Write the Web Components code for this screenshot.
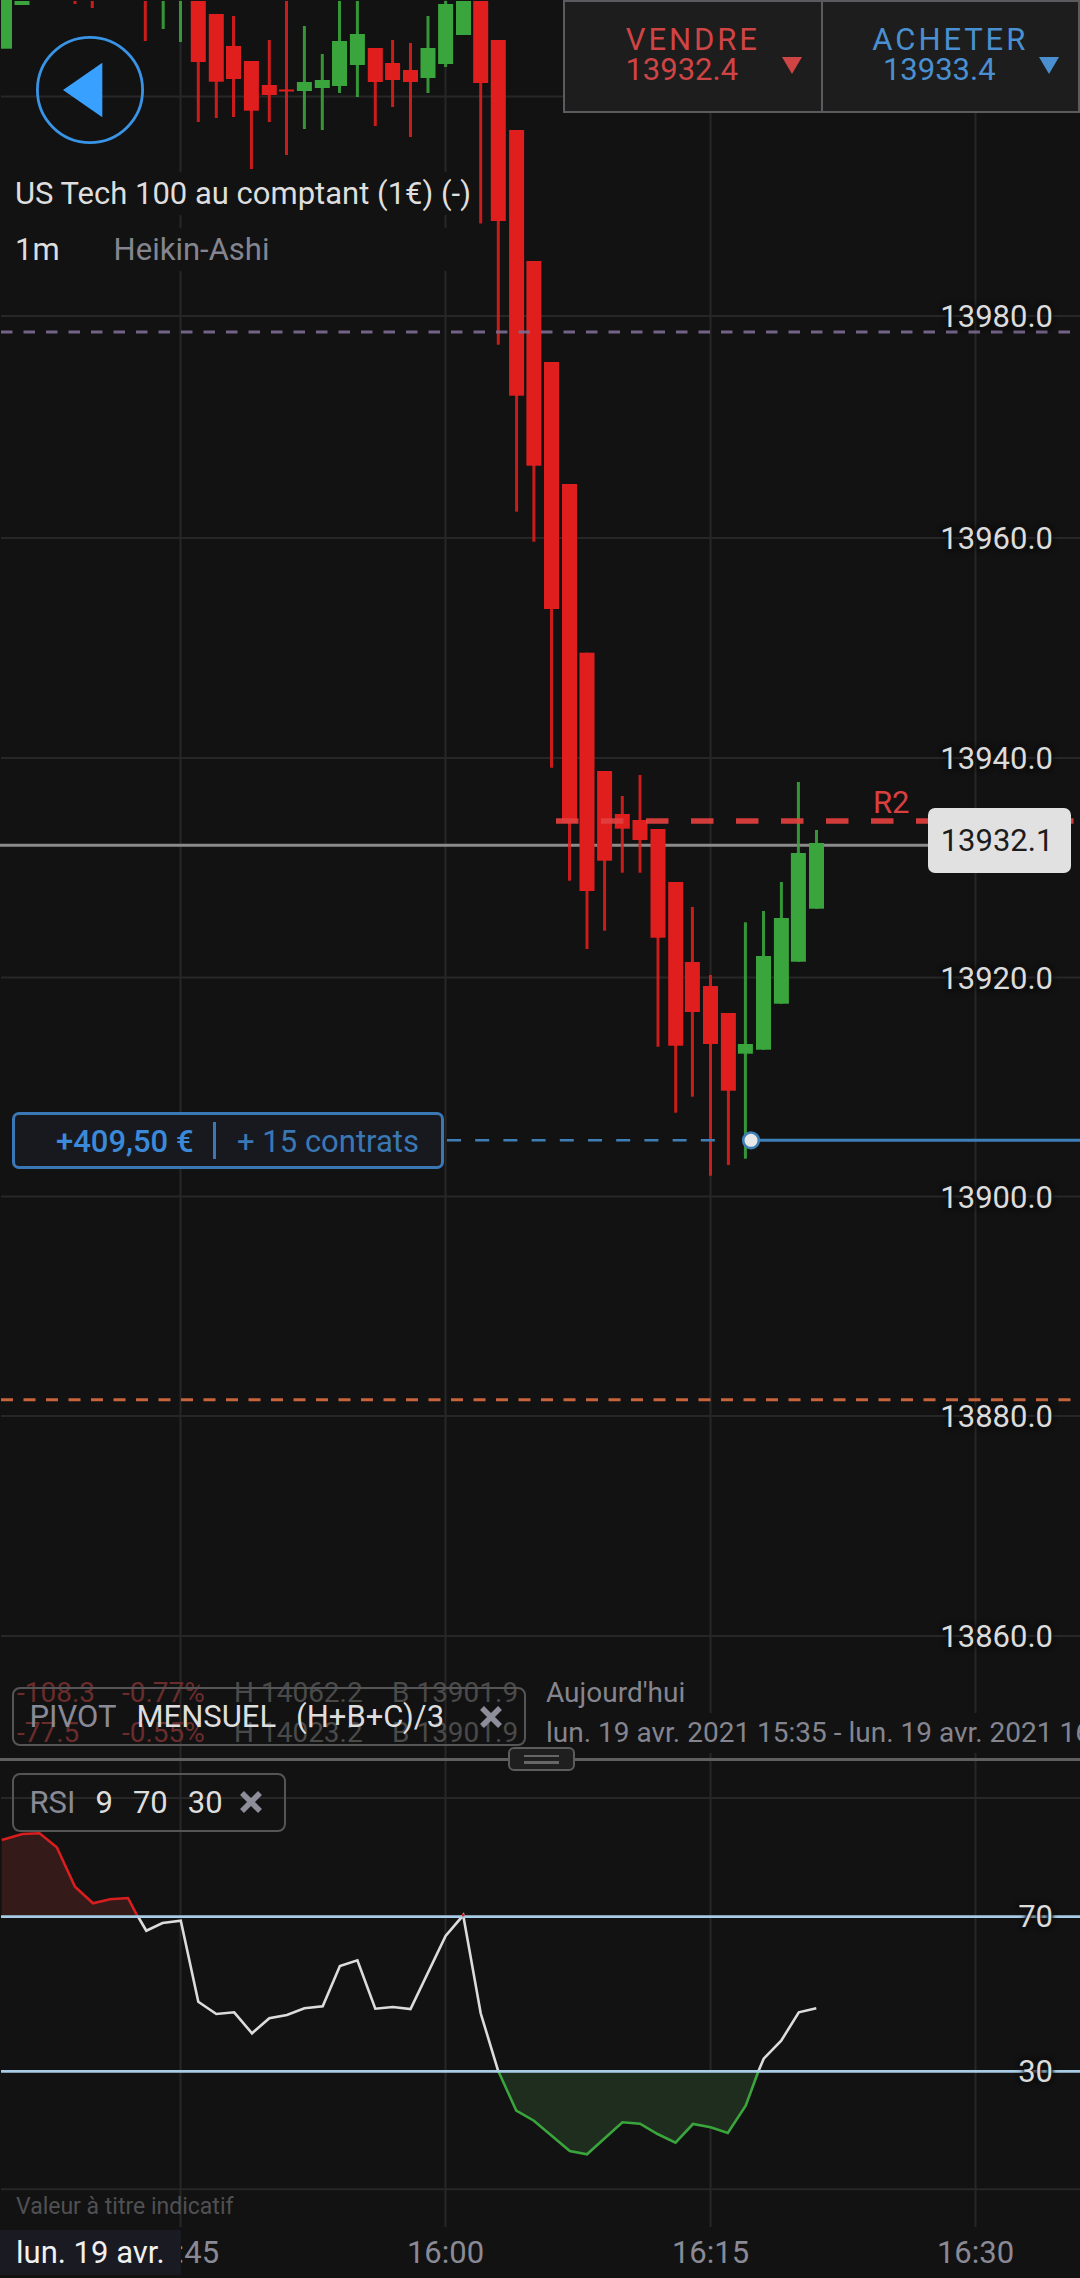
<!DOCTYPE html>
<html lang="fr">
<head>
<meta charset="utf-8">
<title>US Tech 100</title>
<style>
    html, body {
        margin: 0;
        background: #121212;
        overflow: hidden;
    }
    trade-screen {
        font-family: Roboto, "Liberation Sans", sans-serif;
    }
</style>
</head>
<body>
<trade-screen>
    <price-chart>
        <back-button></back-button>
        <instrument-title name="US Tech 100 au comptant (1€) (-)" period="1m" kind="Heikin-Ashi"></instrument-title>
        <trade-buttons sell="13932.4" buy="13933.4"></trade-buttons>
        <position-tag amount="+409,50 €" size="+ 15 contrats"></position-tag>
        <session-stats></session-stats>
        <indicator-chip name="PIVOT" style="left:12px;top:1687px;height:59px"><span>MENSUEL</span><span>(H+B+C)/3</span></indicator-chip>
    </price-chart>
    <pane-divider></pane-divider>
    <rsi-pane>
        <indicator-chip name="RSI" style="left:12px;top:11.5px;height:59px" close-gap="17"><span>9</span><span>70</span><span>30</span></indicator-chip>
    </rsi-pane>
    <time-axis date="lun. 19 avr."></time-axis>
</trade-screen>

<script>
const GRID_X = [180.5, 445.5, 710.5, 975.5];

// x, wick top, body top, body bottom, wick bottom, colour
const CANDLES = [
    [4.5, 0, 0, 48.7, 0, 'g'], [22, 1, 1, 5, 5, 'g'],
    [75, 1, 1, 1, 4, 'r'], [92.3, 1, 1, 1, 8, 'r'], [145.3, 1, 1, 1, 41, 'r'],
    [163.2, 1, 1, 1, 29, 'g'], [180.5, 1, 1, 1, 42, 'g'],
    [198.3, 1, 1, 62, 122, 'r'], [216.3, 14, 14, 81.7, 118, 'r'], [233.5, 16, 46, 79, 117, 'r'],
    [251.4, 61, 61, 110.7, 169, 'r'], [269.3, 40, 85, 95, 122, 'r'], [286.5, 1, 89.5, 91.5, 155, 'r'],
    [304.4, 26, 82, 91, 129, 'g'], [322.3, 54, 80, 88, 130, 'g'], [339.5, 1, 41, 86, 93, 'g'],
    [357.4, 1, 34, 65, 97, 'g'], [375.3, 48, 48, 82, 126, 'r'], [392.6, 40, 63, 80, 107, 'r'],
    [410.5, 43, 70, 82, 137, 'r'], [428, 16, 48, 78, 93, 'g'], [445.6, 1, 4, 64, 67, 'g'],
    [463.5, 1, 1, 35, 35, 'g'], [480.7, 1, 1, 83, 223.5, 'r'], [498.3, 40, 40, 221, 344.7, 'r'],
    [516.6, 130, 130, 395.7, 511.7, 'r'], [533.9, 261, 261, 465.7, 541.7, 'r'], [551.5, 362, 362, 609, 767.7, 'r'],
    [569.5, 484, 484, 823, 880.7, 'r'], [587, 652.7, 652.7, 891, 949, 'r'], [604.6, 771, 771, 860.7, 930.7, 'r'],
    [622.3, 796, 814, 828.7, 872.7, 'r'], [640, 775, 820, 840, 872.7, 'r'], [658, 829, 829, 937.7, 1046.7, 'r'],
    [675.7, 882, 882, 1045.7, 1112.7, 'r'], [692.4, 907, 962, 1012, 1096.7, 'r'], [710.5, 975, 986, 1044, 1175.7, 'r'],
    [728.4, 1013, 1013, 1090.7, 1165, 'r'], [745.4, 922.3, 1044, 1053.7, 1158.7, 'g'], [763.5, 911, 956, 1049.7, 1049.7, 'g'],
    [781.4, 882, 918, 1003.7, 1003.7, 'g'], [798.4, 782, 853, 961.7, 961.7, 'g'], [816.5, 830, 843, 908.7, 908.7, 'g']
];

const COLORS = { r: '#e01e1e', g: '#3aa53c' };

const PRICE_LINES = [
    [13980, 316], [13960, 538], [13940, 758], [13920, 977.5],
    [13900, 1196.5], [13880, 1416], [13860, 1636]
];

const axisLabelCss = `
    .axis-label {
        position: absolute;
        right: 27px;
        height: 40px;
        line-height: 40px;
        font-size: 31px;
        color: #dcdcdc;
        text-shadow: 0 0 3px #121212, 0 0 3px #121212, 0 0 4px #121212, 0 0 6px #121212;
    }
`;

function points(list) {
    return list.map(p => p.join(',')).join(' ');
}

class TradeScreen extends HTMLElement {
    constructor() {
        super();
        this.attachShadow({ mode: 'open' });
        this.shadowRoot.innerHTML = `
            <style>
                :host {
                    display: flex;
                    flex-direction: column;
                    width: 1080px;
                    height: 2278px;
                    overflow: hidden;
                    background: #121212;
                }
            </style>
            <slot></slot>
        `;
    }
}

class PriceChart extends HTMLElement {
    constructor() {
        super();
        this.attachShadow({ mode: 'open' });
    }

    connectedCallback() {
        const grid = PRICE_LINES.concat([[14000, 96.5]])
            .map(l => `<line x1="1" x2="1080" y1="${l[1]}" y2="${l[1]}"/>`).join('');
        const verticals = GRID_X.map(x => `<line x1="${x}" x2="${x}" y1="0" y2="1758"/>`).join('');

        const candles = CANDLES.map(c => {
            const [x, wickTop, bodyTop, bodyBottom, wickBottom, color] = c;
            const left = Math.max(1, x - 7.5);
            const right = x + 7.5;
            return `<g fill="${COLORS[color]}">
                <rect x="${x - 1.5}" y="${wickTop}" width="3" height="${wickBottom - wickTop}" fill-opacity=".9"/>
                <rect x="${left}" y="${bodyTop}" width="${right - left}" height="${bodyBottom - bodyTop}"/>
            </g>`;
        }).join('');

        const labels = PRICE_LINES
            .map(l => `<div class="axis-label" style="top:${l[1] - 19}px">${l[0]}.0</div>`).join('');

        this.shadowRoot.innerHTML = `
            <style>
                :host {
                    display: block;
                    position: relative;
                    flex: none;
                    height: 1758px;
                }
                svg {
                    position: absolute;
                    left: 0;
                    top: 0;
                }
                ${axisLabelCss}
                .r2 {
                    position: absolute;
                    left: 873px;
                    top: 783px;
                    line-height: 40px;
                    font-size: 31px;
                    color: #d84040;
                }
                .last {
                    position: absolute;
                    left: 928px;
                    top: 808px;
                    width: 143px;
                    height: 65px;
                    box-sizing: border-box;
                    padding-right: 5px;
                    line-height: 65px;
                    text-align: center;
                    font-size: 31px;
                    color: #1c1c1c;
                    background: #e1e1e1;
                    border-radius: 7px;
                }
            </style>
            <svg width="1080" height="1758" viewBox="0 0 1080 1758">
                <g stroke="#272727" stroke-width="2">${grid}${verticals}</g>
                <line x1="0" x2="930" y1="845.3" y2="845.3" stroke="#8c8c8c" stroke-width="3"/>
                ${candles}
                <line x1="1" x2="1080" y1="332" y2="332" stroke="#7d6c94" stroke-width="3" stroke-dasharray="11.5 11" opacity=".9"/>
                <line x1="1" x2="1080" y1="1399.7" y2="1399.7" stroke="#c8643c" stroke-width="3" stroke-dasharray="12 10.5"/>
                <line x1="556" x2="1080" y1="821" y2="821" stroke="#e2403f" stroke-width="5.5" stroke-dasharray="22.5 22.5" opacity=".92"/>
                <line x1="447" x2="716" y1="1140.3" y2="1140.3" stroke="#3f7fb8" stroke-width="2.5" stroke-dasharray="14 14.2"/>
                <line x1="751" x2="1080" y1="1140.3" y2="1140.3" stroke="#3f7fb8" stroke-width="3"/>
                <circle cx="751" cy="1140.3" r="7.8" fill="#e8e8e8" stroke="#3f7fb8" stroke-width="2.6"/>
            </svg>
            ${labels}
            <div class="r2">R2</div>
            <div class="last">13932.1</div>
            <slot></slot>
        `;
    }
}

class BackButton extends HTMLElement {
    constructor() {
        super();
        this.attachShadow({ mode: 'open' });
        this.shadowRoot.innerHTML = `
            <style>
                :host {
                    display: block;
                    position: absolute;
                    left: 36px;
                    top: 36px;
                    width: 108px;
                    height: 108px;
                }
            </style>
            <svg width="108" height="108" viewBox="0 0 108 108">
                <circle cx="54" cy="54" r="52.6" fill="none" stroke="#3a94e6" stroke-width="2.8"/>
                <polygon points="27,54 66.3,26.7 66.3,81.3" fill="#38a0ff"/>
            </svg>
        `;
    }
}

class InstrumentTitle extends HTMLElement {
    constructor() {
        super();
        this.attachShadow({ mode: 'open' });
    }

    connectedCallback() {
        this.shadowRoot.innerHTML = `
            <style>
                :host {
                    display: flex;
                    flex-direction: column;
                    gap: 13px;
                    position: absolute;
                    left: 15px;
                    top: 172px;
                    width: 455px;
                    font-size: 31px;
                    color: #dedede;
                }
                .row {
                    display: flex;
                    align-items: center;
                    height: 43px;
                    white-space: nowrap;
                    background: #121212;
                }
                .kind {
                    margin-left: 54px;
                    color: #85858f;
                }
            </style>
            <div class="row">${this.getAttribute('name')}</div>
            <div class="row"><span>${this.getAttribute('period')}</span><span class="kind">${this.getAttribute('kind')}</span></div>
        `;
    }
}

class TradeButtons extends HTMLElement {
    constructor() {
        super();
        this.attachShadow({ mode: 'open' });
    }

    cell(label, price, cls) {
        return `
            <div class="cell ${cls}">
                <div class="label">${label}</div>
                <div class="price">${price}</div>
                <svg width="20" height="17" viewBox="0 0 20 17"><polygon points="0,0 20,0 10,17"/></svg>
            </div>
        `;
    }

    connectedCallback() {
        this.shadowRoot.innerHTML = `
            <style>
                :host {
                    display: flex;
                    position: absolute;
                    left: 563px;
                    top: 0;
                    width: 517px;
                    height: 113px;
                    box-sizing: border-box;
                    border: 2px solid #5a5a5f;
                    background: #1d1d1d;
                    font-size: 31px;
                    line-height: 30px;
                }
                .cell {
                    position: relative;
                    flex: 1;
                    box-sizing: border-box;
                    padding-top: 23px;
                    text-align: center;
                }
                .cell + .cell {
                    border-left: 2px solid #5a5a5f;
                }
                .label {
                    letter-spacing: 2.9px;
                }
                .price {
                    padding-right: 22px;
                }
                .sell {
                    color: #cf4444;
                    fill: #cf4444;
                }
                .buy {
                    color: #4a90d0;
                    fill: #4a90d0;
                }
                svg {
                    position: absolute;
                    right: 19px;
                    top: 55px;
                }
            </style>
            ${this.cell('VENDRE', this.getAttribute('sell'), 'sell')}
            ${this.cell('ACHETER', this.getAttribute('buy'), 'buy')}
        `;
    }
}

class PositionTag extends HTMLElement {
    constructor() {
        super();
        this.attachShadow({ mode: 'open' });
    }

    connectedCallback() {
        this.shadowRoot.innerHTML = `
            <style>
                :host {
                    display: flex;
                    align-items: center;
                    position: absolute;
                    left: 11.5px;
                    top: 1112px;
                    width: 432px;
                    height: 57px;
                    box-sizing: border-box;
                    padding: 2px 0 0 41.5px;
                    border: 3px solid #3a78b5;
                    border-radius: 7px;
                    background: #18191f;
                    font-size: 31px;
                    color: #3a78b5;
                    white-space: nowrap;
                }
                .amount {
                    font-weight: 500;
                    color: #3b8ad9;
                }
                .bar {
                    width: 3px;
                    height: 37px;
                    margin: -2px 21px 0 19.5px;
                    background: #3a78b5;
                }
            </style>
            <span class="amount">${this.getAttribute('amount')}</span>
            <span class="bar"></span>
            <span>${this.getAttribute('size')}</span>
        `;
    }
}

class SessionStats extends HTMLElement {
    constructor() {
        super();
        this.attachShadow({ mode: 'open' });
        this.shadowRoot.innerHTML = `
            <style>
                :host {
                    display: grid;
                    grid-template-columns: 105px 112px 158px 154px 1fr;
                    grid-auto-rows: 40px;
                    position: absolute;
                    left: 17px;
                    top: 1673px;
                    width: 1063px;
                    font-size: 28px;
                    line-height: 40px;
                    white-space: nowrap;
                    overflow: hidden;
                }
                .down { color: #6a2c2c; }
                .range { color: #4a4a4a; }
                .day { color: #85858f; background: #121212; }
            </style>
            <span class="down">-108.3</span><span class="down">-0.77%</span>
            <span class="range">H 14062.2</span><span class="range">B 13901.9</span>
            <span class="day" style="background:none">Aujourd'hui</span>
            <span class="down">-77.5</span><span class="down">-0.55%</span>
            <span class="range">H 14023.2</span><span class="range">B 13901.9</span>
            <span class="day">lun. 19 avr. 2021 15:35 - lun. 19 avr. 2021 16:35</span>
        `;
    }
}

class IndicatorChip extends HTMLElement {
    constructor() {
        super();
        this.attachShadow({ mode: 'open' });
    }

    connectedCallback() {
        const closeGap = this.getAttribute('close-gap') || 36;
        this.shadowRoot.innerHTML = `
            <style>
                :host {
                    display: flex;
                    align-items: center;
                    gap: 20px;
                    position: absolute;
                    box-sizing: border-box;
                    padding: 0 22px 0 15.5px;
                    border: 2px solid #555558;
                    border-radius: 8px;
                    font-size: 31px;
                    color: #dedede;
                    white-space: nowrap;
                }
                .name {
                    color: #8a8a96;
                }
                svg {
                    margin-left: ${closeGap - 20}px;
                }
            </style>
            <span class="name">${this.getAttribute('name')}</span>
            <slot></slot>
            <svg width="22" height="22" viewBox="0 0 22 22">
                <path d="M2 2L20 20M20 2L2 20" stroke="#8e8e9a" stroke-width="5.5" fill="none"/>
            </svg>
        `;
    }
}

class PaneDivider extends HTMLElement {
    constructor() {
        super();
        this.attachShadow({ mode: 'open' });
        this.shadowRoot.innerHTML = `
            <style>
                :host {
                    display: block;
                    position: relative;
                    flex: none;
                    height: 3px;
                    background: #5f5f5f;
                    z-index: 2;
                }
                .handle {
                    position: absolute;
                    left: 508px;
                    top: -11px;
                    display: flex;
                    flex-direction: column;
                    align-items: center;
                    justify-content: center;
                    gap: 4px;
                    box-sizing: border-box;
                    width: 67px;
                    height: 24px;
                    border: 2.5px solid #5c5c5c;
                    border-radius: 6px;
                    background: #1f1f1f;
                }
                .handle span {
                    width: 35px;
                    height: 2.5px;
                    background: #666;
                }
            </style>
            <div class="handle"><span></span><span></span></div>
        `;
    }
}

class RsiPane extends HTMLElement {
    constructor() {
        super();
        this.attachShadow({ mode: 'open' });
    }

    connectedCallback() {
        const verticals = GRID_X.map(x => `<line x1="${x}" x2="${x}" y1="1761" y2="2227"/>`).join('');
        const over = [[1.7, 1840], [22.4, 1834], [39.6, 1833.3], [56.8, 1847.3], [75, 1886.7], [93, 1903.3], [110, 1899.3], [128, 1898], [137.7, 1916.7]];
        const under = [[498.4, 2071.3], [516.3, 2110.7], [533.9, 2120.7], [569.8, 2151], [587, 2154.3], [622.4, 2122.3], [640, 2123.7], [657.6, 2134], [675.5, 2142.7], [693, 2124], [710.6, 2127.3], [727.8, 2133], [745.7, 2105.7], [758.4, 2071.3]];
        const mid = [[137.7, 1916], [146.3, 1930.7], [162.5, 1923], [180.8, 1920.7], [198.3, 2001.7], [216.3, 2014], [234.2, 2012.3], [252, 2033.3], [269.3, 2018.3], [286.9, 2015], [304.4, 2008.3], [322.7, 2006.3], [339.9, 1966], [357.4, 1960.3], [375.3, 2008.7], [392.9, 2007], [410.5, 2009], [445.6, 1936], [463.2, 1915.3], [480.7, 2013.3], [498.3, 2071.3]];
        const tail = [[758.4, 2071.3], [763.7, 2058.7], [781.2, 2040.7], [798.8, 2012.3], [816.3, 2008.3]];

        this.shadowRoot.innerHTML = `
            <style>
                :host {
                    display: block;
                    position: relative;
                    flex: none;
                    height: 466px;
                }
                svg {
                    position: absolute;
                    left: 0;
                    top: 0;
                }
                ${axisLabelCss}
                .note {
                    position: absolute;
                    left: 16px;
                    top: 431px;
                    line-height: 30px;
                    font-size: 23px;
                    color: #505052;
                }
            </style>
            <svg width="1080" height="466" viewBox="0 1761 1080 466">
                <g stroke="#272727" stroke-width="2">
                    ${verticals}
                    <line x1="1" x2="1080" y1="1798" y2="1798"/>
                    <line x1="1" x2="1080" y1="2189.3" y2="2189.3"/>
                </g>
                <polygon points="${points(over)} 1.7,1916.7" fill="#351a1a"/>
                <polygon points="${points(under)}" fill="#1f2d1f"/>
                <g fill="none" stroke-width="2.6">
                    <polyline points="${points(over)}" stroke="#d81e1e"/>
                    <polyline points="${points(mid)}" stroke="#dcdcdc"/>
                    <polyline points="${points(under)}" stroke="#3aa53c"/>
                    <polyline points="${points(tail)}" stroke="#dcdcdc"/>
                </g>
                <g stroke="#a8cbe6" stroke-width="2.8">
                    <line x1="1" x2="1080" y1="1916.7" y2="1916.7"/>
                    <line x1="1" x2="1080" y1="2071.3" y2="2071.3"/>
                </g>
                <circle cx="463.2" cy="1915" r="1.5" fill="#d81e1e"/>
            </svg>
            <div class="axis-label" style="top:136px">70</div>
            <div class="axis-label" style="top:291px">30</div>
            <div class="note">Valeur à titre indicatif</div>
            <slot></slot>
        `;
    }
}

class TimeAxis extends HTMLElement {
    constructor() {
        super();
        this.attachShadow({ mode: 'open' });
    }

    connectedCallback() {
        const ticks = ['15:45', '16:00', '16:15', '16:30']
            .map(t => `<span class="tick">${t}</span>`).join('');
        this.shadowRoot.innerHTML = `
            <style>
                :host {
                    display: flex;
                    align-items: center;
                    position: relative;
                    flex: none;
                    height: 51px;
                    padding-left: 48px;
                    font-size: 31px;
                    color: #8a8a96;
                }
                .tick {
                    flex: none;
                    width: 265px;
                    text-align: center;
                }
                .date {
                    display: flex;
                    align-items: center;
                    position: absolute;
                    left: 0;
                    top: 3px;
                    width: 181px;
                    height: 45px;
                    box-sizing: border-box;
                    padding-left: 16px;
                    background: #1a1a22;
                    color: #f0f0f0;
                }
            </style>
            ${ticks}
            <div class="date">${this.getAttribute('date')}</div>
        `;
    }
}

customElements.define('trade-screen', TradeScreen);
customElements.define('price-chart', PriceChart);
customElements.define('back-button', BackButton);
customElements.define('instrument-title', InstrumentTitle);
customElements.define('trade-buttons', TradeButtons);
customElements.define('position-tag', PositionTag);
customElements.define('session-stats', SessionStats);
customElements.define('indicator-chip', IndicatorChip);
customElements.define('pane-divider', PaneDivider);
customElements.define('rsi-pane', RsiPane);
customElements.define('time-axis', TimeAxis);
</script>
</body>
</html>
